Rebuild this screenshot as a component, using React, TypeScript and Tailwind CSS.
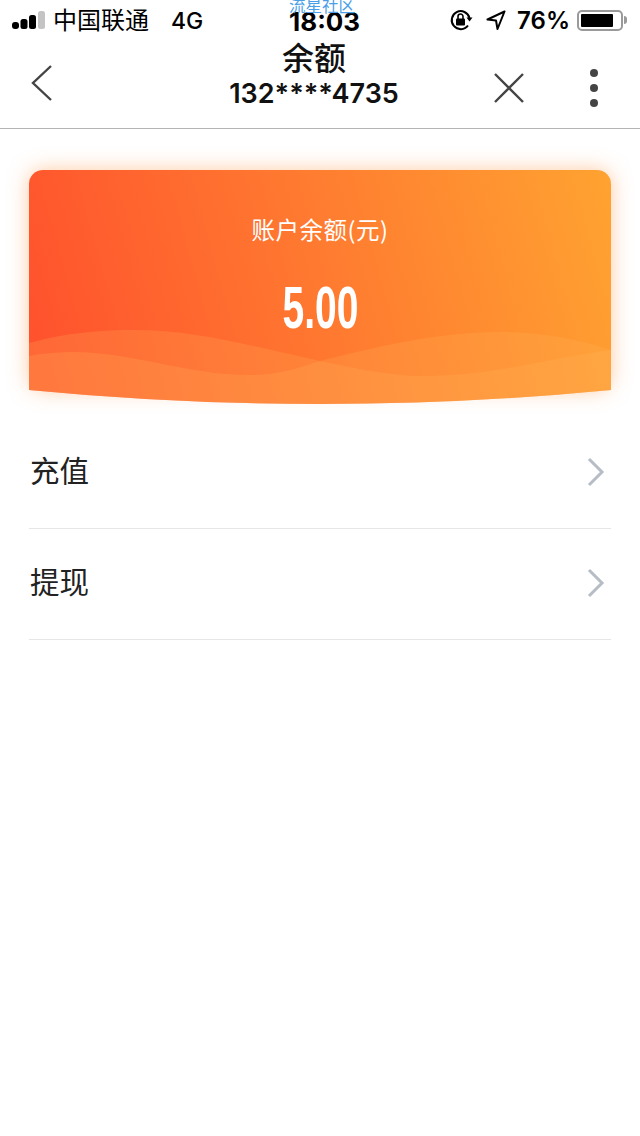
import React from 'react';

const fontStack = "font-['Inter','Noto_Sans_CJK_SC',sans-serif]";

function SignalBars() {
  return (
    <svg width="34" height="20" viewBox="0 0 34 20">
      <rect x="1" y="12" width="7" height="7" rx="3" fill="#000" />
      <rect x="9.5" y="9" width="7" height="10" rx="2.5" fill="#000" />
      <rect x="18" y="5" width="7" height="14" rx="2.5" fill="#000" />
      <rect x="27" y="1" width="7" height="18" rx="2.5" fill="#c4c4c4" />
    </svg>
  );
}

function RotationLock() {
  return (
    <svg width="24" height="22" viewBox="0 0 24 22" fill="none">
      <path d="M19.5 9A9 9 0 1 0 18 16.5" stroke="#000" strokeWidth="2" />
      <path d="M16.5 8.5h6l-3 4z" fill="#000" />
      <rect x="6" y="9.5" width="9" height="7" rx="1" fill="#000" />
      <path d="M8 10V7.5a2.5 2.5 0 0 1 5 0V10" stroke="#000" strokeWidth="1.6" />
    </svg>
  );
}

function LocationArrow() {
  return (
    <svg width="20" height="20" viewBox="0 0 20 20" fill="none">
      <path d="M18.5 1.5L1.5 9.5l8.5 1 1.5 8.5z" stroke="#000" strokeWidth="2" strokeLinejoin="round" />
    </svg>
  );
}

function Battery() {
  return (
    <div className="flex items-center">
      <div className="w-[46px] h-[21px] rounded-[5px] border-2 border-[#9a9a9a] p-[2px]">
        <div className="h-full w-[32px] bg-black rounded-[1px]" />
      </div>
      <div className="w-[3px] h-[8px] bg-[#9a9a9a] rounded-r-sm ml-[1px]" />
    </div>
  );
}

function StatusBar() {
  return (
    <div className="relative h-[40px] flex items-center justify-between pl-[11px] pr-[13px] text-black">
      <div className="flex items-center">
        <SignalBars />
        <span className="ml-[8px] mt-[2px] text-[24px] leading-[30px]">中国联通</span>
        <span className="ml-[22px] mt-[2px] text-[23px] leading-[30px] font-medium">4G</span>
      </div>
      <div className="absolute left-[289px] top-[7px] text-[26px] leading-[30px] font-bold">18:03</div>
      <div className="absolute left-[289px] top-[-4px] text-[16.5px] leading-[20px] text-[#4a9fe8]">流星社区</div>
      <div className="flex items-center">
        <RotationLock />
        <span className="ml-[12px]"><LocationArrow /></span>
        <span className="ml-[11px] mt-[1px] text-[24px] leading-[30px] font-semibold">76%</span>
        <span className="ml-[7px]"><Battery /></span>
      </div>
    </div>
  );
}

function NavBar() {
  return (
    <div className="relative h-[89px] border-b border-[#b4b4b4] flex items-start justify-between">
      <svg className="ml-[30px] mt-[24px]" width="24" height="38" viewBox="0 0 24 38" fill="none">
        <path d="M21 2L3 19l18 17" stroke="#444" strokeWidth="2.4" />
      </svg>
      <div className="absolute left-0 w-[628px] top-[1px] flex flex-col items-center text-[#111]">
        <span className="text-[32px] leading-[36px] font-medium">余额</span>
        <span className="mt-[1px] text-[27px] leading-[32px] font-semibold">132****4735</span>
      </div>
      <div className="flex items-start">
        <svg className="mt-[32px]" width="32" height="32" viewBox="0 0 32 32" fill="none">
          <path d="M2 2l28 28M30 2L2 30" stroke="#444" strokeWidth="2.4" />
        </svg>
        <div className="ml-[65px] mr-[42px] mt-[29px] flex flex-col gap-[7px]">
          <div className="w-[8px] h-[8px] rounded-full bg-[#444]" />
          <div className="w-[8px] h-[8px] rounded-full bg-[#444]" />
          <div className="w-[8px] h-[8px] rounded-full bg-[#444]" />
        </div>
      </div>
    </div>
  );
}

function BalanceCard() {
  return (
    <div className="relative mx-[29px] mt-[41px] h-[234px] text-white">
      <div className="absolute inset-x-0 top-0 h-[220px] rounded-[14px] shadow-[0_0_20px_rgba(255,150,70,0.5)]" />
      <svg className="absolute inset-0" width="582" height="234" viewBox="0 0 582 234">
        <defs>
          <linearGradient id="cardFill" gradientUnits="userSpaceOnUse" x1="0" y1="180" x2="582" y2="20">
            <stop offset="0" stopColor="#ff512d" />
            <stop offset="0.5" stopColor="#ff7a30" />
            <stop offset="1" stopColor="#ffa231" />
          </linearGradient>
          <clipPath id="cardShape">
            <path d="M14 0H568a14 14 0 0 1 14 14V220Q291 248 0 220V14A14 14 0 0 1 14 0Z" />
          </clipPath>
        </defs>
        <g clipPath="url(#cardShape)">
          <rect width="582" height="234" fill="url(#cardFill)" />
          <path d="M0 173C40 162 75 160 105 160C170 160 230 178 291 191C325 198 360 206 395 206C465 206 530 186 582 180V234H0Z" fill="#ffb45a" fillOpacity="0.22" />
          <path d="M0 186C15 183 30 182 46 182C100 182 165 206 222 205C250 205 270 198 291 191C350 176 410 162 470 162C515 162 550 170 582 180V234H0Z" fill="#ffb45a" fillOpacity="0.22" />
        </g>
      </svg>
      <div className="relative flex flex-col items-center">
        <span className="mt-[43px] text-[23.5px] leading-[32px] tracking-[0.5px] font-['Noto_Sans_CJK_SC',sans-serif]">账户余额(元)</span>
        <span className="mt-[29px] text-[60px] leading-[68px] font-bold font-['Liberation_Sans',sans-serif] scale-x-[0.65]">5.00</span>
      </div>
    </div>
  );
}

function MenuRow({ label }: { label: string }) {
  return (
    <div className="h-[111px] mx-[29px] flex items-center justify-between border-b border-[#e6e6e6]">
      <span className="ml-[1px] mt-[-8px] text-[29.5px] leading-[36px] text-[#222] font-['Noto_Sans_CJK_SC',sans-serif]">{label}</span>
      <svg className="mr-[6px] mt-[-2px]" width="18" height="30" viewBox="0 0 18 30" fill="none">
        <path d="M2 2l13 13L2 28" stroke="#b7bdc6" strokeWidth="3" />
      </svg>
    </div>
  );
}

export default function App() {
  return (
    <div className={`w-[640px] h-[1136px] bg-white overflow-hidden ${fontStack}`}>
      <StatusBar />
      <NavBar />
      <BalanceCard />
      <div className="mt-[14px]">
        <MenuRow label="充值" />
        <MenuRow label="提现" />
      </div>
    </div>
  );
}
